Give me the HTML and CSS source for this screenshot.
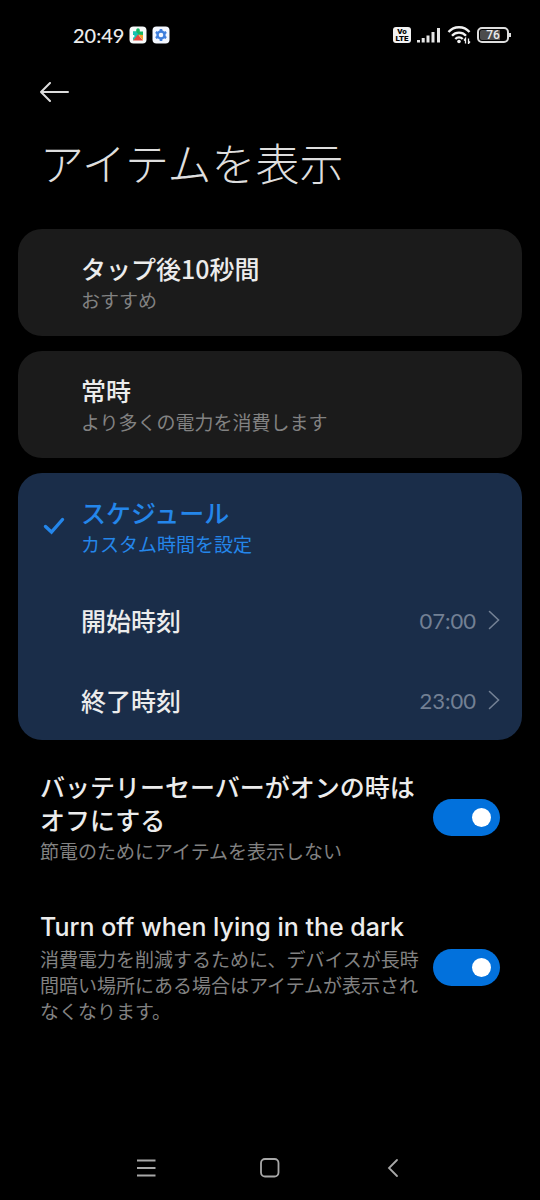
FILE: index.html
```html
<!DOCTYPE html>
<html lang="ja">
<head>
<meta charset="utf-8">
<meta name="viewport" content="width=device-width, initial-scale=1">
<title>アイテムを表示</title>
<link rel="stylesheet" href="styles.css">
</head>
<body>
<div class="screen">
  <div class="status">
    <div class="status-side">
      <span class="clock">20:49</span>
      <svg class="app-icon" width="18" height="18" viewBox="0 0 18 18" aria-hidden="true">
        <rect x="0.5" y="0.5" width="17" height="17" rx="4" fill="#f7fbfb"/>
        <path d="M4 5.500h3.200V4a1.800 1.800 0 0 1 3.600 0v1.500H14V9H4z" fill="#14b866"/>
        <path d="M4 5.500h3l3 3.500-6 5.500v-3a1.500 1.500 0 0 0 0-3z" fill="#16c3b4"/>
        <path d="M9 8.500l5 6H4z" fill="#e8453c"/>
        <path d="M9.500 8.500L14 9v5.500z" fill="#f5a02a"/>
      </svg>
      <svg class="app-icon" width="18" height="18" viewBox="0 0 18 18" aria-hidden="true">
        <rect x="0.5" y="0.5" width="17" height="17" rx="4" fill="#f4f8ff"/>
        <circle cx="9" cy="9" r="3.500" fill="none" stroke="#3f7fdc" stroke-width="2.400"/>
        <path d="M9 3v2.500M9 12.500V15M3.800 6l2.200 1.300M12 10.700l2.200 1.300M3.800 12L6 10.700M12 7.300L14.200 6" stroke="#3f7fdc" stroke-width="2.600"/>
      </svg>
    </div>
    <div class="status-side status-right">
      <span class="volte"><span>Vo</span><span>LTE</span></span>
      <svg width="24" height="16" viewBox="0 0 24 16" aria-hidden="true">
        <path d="M1.500 15.500v-2.500M6.200 15.500v-4.500M11 15.500V8.500M16 15.500V5M21.500 15.500V1" stroke="#e6e6e6" stroke-width="3"/>
      </svg>
      <svg width="24" height="18" viewBox="0 0 24 18" fill="none" stroke="#f2f2f2" aria-hidden="true">
        <path d="M1.500 6a14 14 0 0 1 21 0M5 9.700a9.500 9.500 0 0 1 14 0M8.300 13a5 5 0 0 1 7.400 0" stroke-width="2.300"/>
        <circle cx="12" cy="15.500" r="1.800" fill="#f2f2f2" stroke="none"/>
        <path d="M18.500 17.500v-5l-1.500 2M21.500 12.500v5l1.500-2" stroke-width="1.300"/>
      </svg>
      <span class="battery"><span class="battery-level">76</span></span>
    </div>
  </div>

  <header class="header">
    <button class="back" type="button" aria-label="戻る">
      <svg width="30" height="20" viewBox="0 0 30 20" fill="none" stroke="#dcdcdc" stroke-width="2" stroke-linecap="round" stroke-linejoin="round" aria-hidden="true">
        <path d="M28 10H1M10 1L1 10l9 9"/>
      </svg>
    </button>
    <h1 class="title">アイテムを表示</h1>
  </header>

  <main>
    <div class="cards">
      <div class="card">
        <label class="option">
          <input class="option-input" type="radio" name="show">
          <span class="label">タップ後10秒間</span>
          <span class="note">おすすめ</span>
        </label>
      </div>
      <div class="card">
        <label class="option">
          <input class="option-input" type="radio" name="show">
          <span class="label">常時</span>
          <span class="note">より多くの電力を消費します</span>
        </label>
      </div>
      <div class="card card-selected">
        <label class="option">
          <input class="option-input" type="radio" name="show" checked>
          <svg class="check" width="22" height="18" viewBox="0 0 22 18" fill="none" stroke="#2486ea" stroke-width="3.400" stroke-linecap="round" stroke-linejoin="miter" aria-hidden="true">
            <path d="M2.500 9.500L8.500 15 19.500 2.500"/>
          </svg>
          <span class="label">スケジュール</span>
          <span class="note">カスタム時間を設定</span>
        </label>
        <button class="time-row" type="button">
          <span class="label">開始時刻</span>
          <span class="time">07:00</span>
          <svg width="12" height="20" viewBox="0 0 12 20" fill="none" stroke="#738094" stroke-width="1.600" stroke-linecap="round" aria-hidden="true"><path d="M1.500 1.500L10.500 10l-9 8.500"/></svg>
        </button>
        <button class="time-row" type="button">
          <span class="label">終了時刻</span>
          <span class="time">23:00</span>
          <svg width="12" height="20" viewBox="0 0 12 20" fill="none" stroke="#738094" stroke-width="1.600" stroke-linecap="round" aria-hidden="true"><path d="M1.500 1.500L10.500 10l-9 8.500"/></svg>
        </button>
      </div>
    </div>

    <div class="settings">
      <label class="setting">
        <span class="setting-text">
          <span class="label">バッテリーセーバーがオンの時はオフにする</span>
          <span class="note">節電のためにアイテムを表示しない</span>
        </span>
        <input class="switch" type="checkbox" role="switch" checked>
      </label>
      <label class="setting">
        <span class="setting-text">
          <span class="label label-latin" lang="en">Turn off when lying in the dark</span>
          <span class="note">消費電力を削減するために、デバイスが長時間暗い場所にある場合はアイテムが表示されなくなります。</span>
        </span>
        <input class="switch" type="checkbox" role="switch" checked>
      </label>
    </div>
  </main>

  <nav class="nav">
    <button type="button" aria-label="メニュー">
      <svg width="20" height="20" viewBox="0 0 20 20" stroke="#a8a8a8" stroke-width="1.800" aria-hidden="true"><path d="M1 2.500h18.500M1 10h18.500M1 17.500h18.500"/></svg>
    </button>
    <button type="button" aria-label="ホーム">
      <svg width="20" height="20" viewBox="0 0 20 20" fill="none" stroke="#a8a8a8" stroke-width="1.800" aria-hidden="true"><rect x="1" y="1" width="17.500" height="17.500" rx="4"/></svg>
    </button>
    <button type="button" aria-label="戻る">
      <svg width="20" height="20" viewBox="0 0 20 20" fill="none" stroke="#a8a8a8" stroke-width="1.800" stroke-linecap="round" aria-hidden="true"><path d="M13 2L5 10l8 8"/></svg>
    </button>
  </nav>
</div>
</body>
</html>
```

FILE: styles.css
```css
* {
  box-sizing: border-box;
}

body {
  margin: 0;
  background: #000;
  color: #ececec;
  font-family: "Noto Sans CJK JP", sans-serif;
}

button {
  border: 0;
  padding: 0;
  background: none;
  color: inherit;
  font: inherit;
  text-align: left;
}

svg {
  display: block;
  flex: none;
}

.screen {
  display: flex;
  flex-direction: column;
  min-height: 100vh;
}

.status {
  display: flex;
  align-items: center;
  justify-content: space-between;
  height: 70px;
  padding: 0 31px 0 73px;
}

.status-side {
  display: flex;
  align-items: center;
  gap: 5px;
}

.status-right {
  gap: 6px;
}

.clock {
  font-family: Lato, sans-serif;
  font-size: 20px;
  font-weight: 500;
  line-height: 24px;
}

.volte {
  display: flex;
  flex-direction: column;
  align-items: center;
  justify-content: center;
  width: 18px;
  height: 16px;
  border-radius: 3px;
  background: #f2f2f2;
  color: #000;
  font-family: Roboto, sans-serif;
  font-size: 8px;
  font-weight: 900;
  line-height: 7px;
}

.battery {
  position: relative;
  width: 32px;
  height: 16px;
  border: 2px solid #dedede;
  border-radius: 5px;
  padding: 1px;
}

.battery::after {
  content: "";
  position: absolute;
  top: 4px;
  right: -4px;
  width: 2px;
  height: 4px;
  background: #dedede;
}

.battery-level {
  display: block;
  height: 10px;
  border-radius: 2px;
  background: linear-gradient(to right, #4c4c4c 76%, #000 76%);
  font-family: Roboto, sans-serif;
  font-size: 12px;
  font-weight: 500;
  line-height: 11px;
  text-align: center;
}

.header {
  padding: 12px 40px 0;
}

.back {
  display: block;
}

.title {
  margin: 28px 0 0;
  color: #dedede;
  font-size: 44px;
  font-weight: 300;
  line-height: 64px;
}

.cards {
  display: flex;
  flex-direction: column;
  gap: 15px;
  padding: 35px 18px 0;
}

.card {
  overflow: hidden;
  border-radius: 24px;
  background: #1b1b1b;
}

.card-selected {
  background: #1a2d49;
}

.option {
  position: relative;
  display: block;
  padding: 23px 22px 23px 63px;
}

.option-input {
  position: absolute;
  opacity: 0;
}

.card-selected .option .label,
.card-selected .option .note {
  color: #2486ea;
}

.check {
  position: absolute;
  top: 44px;
  left: 25px;
}

.label {
  display: block;
  font-size: 25px;
  font-weight: 500;
  line-height: 33px;
}

.label-latin {
  font-family: Inter, sans-serif;
}

.note {
  display: block;
  margin-top: 2px;
  color: #828282;
  font-size: 19px;
  font-weight: 400;
  line-height: 26px;
}

.time-row {
  display: flex;
  align-items: center;
  gap: 12px;
  width: 100%;
  height: 80px;
  padding: 0 22px 0 63px;
}

.time-row .label {
  flex: 1;
}

.time {
  color: #738094;
  font-family: Lato, sans-serif;
  font-size: 22px;
}

.settings {
  padding: 6px 40px 0;
}

.setting {
  display: flex;
  align-items: center;
  gap: 13px;
  padding: 24px 0 23px;
}

.setting-text {
  flex: 1;
}

.switch {
  display: flex;
  flex: none;
  align-items: center;
  justify-content: flex-start;
  width: 67px;
  height: 37px;
  margin: 0;
  border-radius: 19px;
  padding: 0 9px;
  background: #333;
  appearance: none;
}

.switch::before {
  content: "";
  width: 19px;
  height: 19px;
  border-radius: 50%;
  background: #fff;
}

.switch:checked {
  justify-content: flex-end;
  background: #0271dc;
}

.nav {
  display: grid;
  grid-template-columns: repeat(3, 23%);
  justify-content: center;
  margin-top: auto;
  padding: 22px 0;
}

.nav button {
  display: flex;
  justify-content: center;
}
```
